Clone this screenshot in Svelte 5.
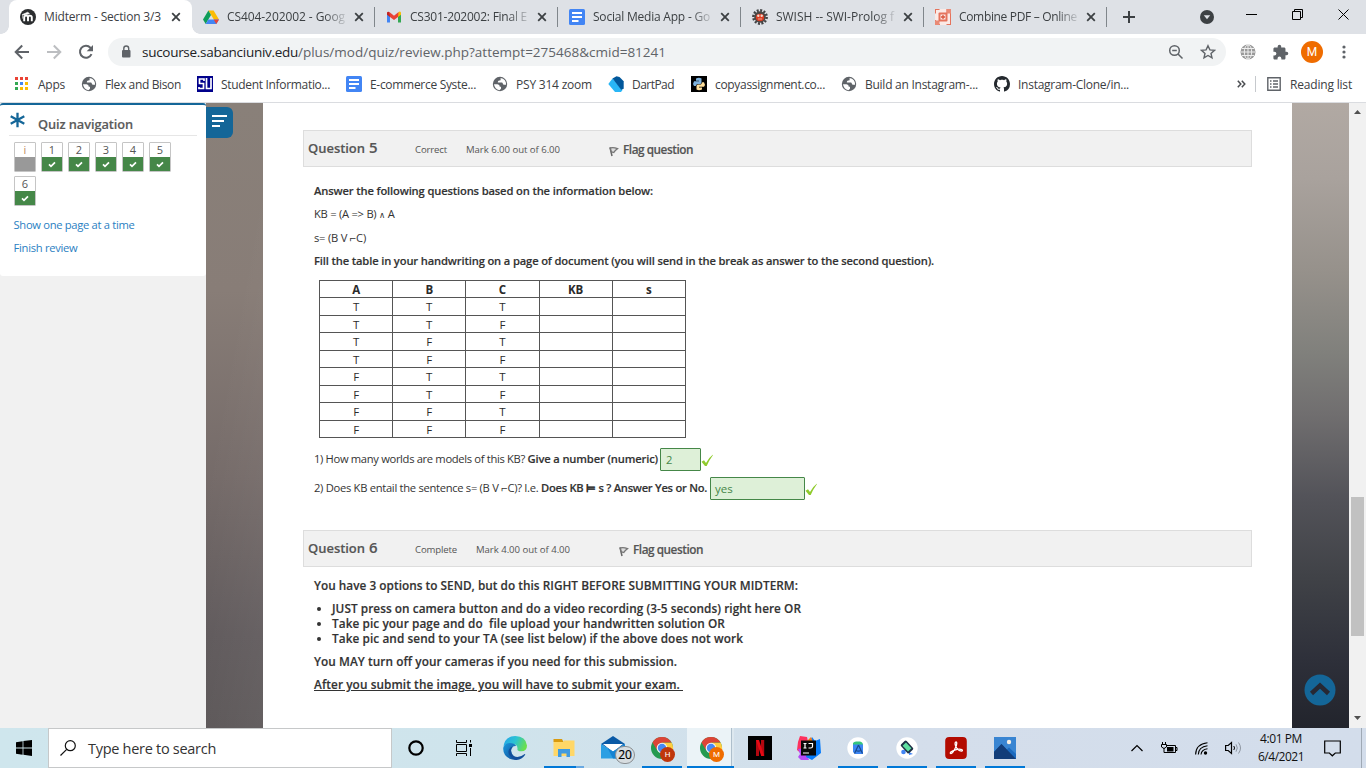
<script>
  const tabs = [
    { icon: 'moodle', title: 'Midterm - Section 3/3', w: 117, active: true },
    { icon: 'drive', title: 'CS404-202002 - Goog', w: 118 },
    { icon: 'gmail', title: 'CS301-202002: Final E', w: 117 },
    { icon: 'docs', title: 'Social Media App - Go', w: 117 },
    { icon: 'swish', title: 'SWISH -- SWI-Prolog f', w: 118 },
    { icon: 'pdf', title: 'Combine PDF – Online', w: 118 }
  ];
  const bookmarks = [
    { x: 12, icon: 'apps', title: 'Apps', w: 27 },
    { x: 80, icon: 'world', title: 'Flex and Bison', w: 76 },
    { x: 196, icon: 'su', title: 'Student Informatio...', w: 109 },
    { x: 345, icon: 'docs', title: 'E-commerce Syste...', w: 106 },
    { x: 491, icon: 'world', title: 'PSY 314 zoom', w: 76 },
    { x: 607, icon: 'dart', title: 'DartPad', w: 42 },
    { x: 690, icon: 'python', title: 'copyassignment.co...', w: 110 },
    { x: 840, icon: 'world', title: 'Build an Instagram-...', w: 113 },
    { x: 993, icon: 'github', title: 'Instagram-Clone/in...', w: 111 }
  ];
  const worlds = ['TTT', 'TTF', 'TFT', 'TFF', 'FTT', 'FTF', 'FFT', 'FFF'];
  const tasks = [
    { icon: 'edge' },
    { icon: 'explorer', bar: 'stack' },
    { icon: 'mail' },
    { icon: 'chrome', bar: 'open', badge: 'H' },
    { icon: 'chrome', bar: 'current', badge: 'M' },
    { icon: 'netflix' },
    { icon: 'idea' },
    { icon: 'studio', bar: 'open' },
    { icon: 'emulator', bar: 'open' },
    { icon: 'acrobat', bar: 'open' },
    { icon: 'photos', bar: 'open' }
  ];

  // Tracks a label so that it fills the given width in pixels.
  function fit(node, width) {
    const natural = node.getBoundingClientRect().width;
    node.style.letterSpacing = (width - natural) / node.textContent.length + 'px';
  }
</script>

{#snippet icon(name)}
  {#if name === 'moodle'}
    <svg width="16" height="16" viewBox="0 0 16 16"><circle cx="8" cy="8" r="8" fill="#2b2d2f" /><path d="M4.200 12.200V8.400q0-1.800 1.900-1.800T8 8.400v3.800M8 8.400q0-1.800 1.900-1.800t1.900 1.800v3.800" fill="none" stroke="#fff" stroke-width="1.900" /><path d="m2.200 5.600 5.600-2.400 1.700 1.600-5.200 1.300zM2.600 5.600v4" fill="#fff" stroke="#fff" stroke-width=".6" /></svg>
  {:else if name === 'drive'}
    <svg width="16" height="16" viewBox="0 0 16 16"><path d="M5.400 1.500h5.200L16 10.600h-5.200z" fill="#fbbc04" /><path d="M5.400 1.500 8 6 2.700 15 0 10.600z" fill="#0f9d58" /><path d="M5.300 10.600H16L13.300 15H2.700z" fill="#4285f4" /><path d="M13.300 15 10.700 10.600H16z" fill="#ea4335" /></svg>
  {:else if name === 'gmail'}
    <svg width="16" height="16" viewBox="0 0 16 16"><path d="M1 3.500v10h3V6z" fill="#4285f4" /><path d="M12 6v7.500h3v-10z" fill="#34a853" /><path d="M12 4.500V8l3-2.200V3.600q-.8-1.800-2.400-.5z" fill="#fbbc04" /><path d="M1 3.600v2.200L4 8V4.500l-.6-1.400Q1.800 2 1 3.600z" fill="#c5221f" /><path d="M3.400 3.100 8 6.700l4.600-3.600L12 8l-4 3-4-3z" fill="#ea4335" /></svg>
  {:else if name === 'docs'}
    <svg width="16" height="16" viewBox="0 0 16 16"><rect width="16" height="16" rx="1.500" fill="#4285f4" /><path d="M3 4h10M3 8h10M3 12h6.500" stroke="#fff" stroke-width="2" /></svg>
  {:else if name === 'swish'}
    <svg width="16" height="16" viewBox="0 0 16 16"><circle cx="8" cy="8" r="6.600" fill="none" stroke="#414244" stroke-width="2.600" stroke-dasharray="2 1.450" /><circle cx="8" cy="8" r="5.800" fill="#4a4745" /><ellipse cx="8" cy="8.500" rx="4.100" ry="3.700" fill="#dd3e23" /><circle cx="6.300" cy="6.700" r="1.200" fill="#f5d9d0" /><circle cx="9.700" cy="6.700" r="1.200" fill="#f5d9d0" /><path d="M6 10h4" stroke="#f3c9bd" stroke-width=".7" /></svg>
  {:else if name === 'pdf'}
    <svg width="16" height="16" viewBox="0 0 16 16"><rect width="16" height="16" fill="#fbeae6" /><path d="M0 0h4.500v1H1v3.500H0zM11.500 0H16v12h-1V4h-3.500zM0 16v-5h1v4h4v1zM16 16h-4.500v-1H15v-3.500h1z" fill="#e5735c" /><path d="M11.500 0H16v4.500h-4.500zM0 11.500h4.500V16H0z" fill="#e98a76" /><rect x="3.500" y="3.500" width="9" height="9" rx="1" fill="#e5735c" /><rect x="5.500" y="5.500" width="5" height="5" fill="#fbeae6" /><path d="M8 6v4M6 8h4" stroke="#d9543b" stroke-width="1.300" /></svg>
  {:else if name === 'apps'}
    <svg width="16" height="16" viewBox="0 0 16 16"><g fill="#ea4335"><path d="M2 1h3v3H2zM7 1h3v3H7zM12 1h3v3h-3z" /></g><path d="M2 6h3v3H2zM2 11h3v3H2z" fill="#34a853" /><path d="M7 6h3v3H7z" fill="#4285f4" /><path d="M12 6h3v3h-3zM7 11h3v3H7zM12 11h3v3h-3z" fill="#fbbc04" /></svg>
  {:else if name === 'world'}
    <svg width="16" height="16" viewBox="0 0 16 16"><circle cx="8" cy="8" r="7.200" fill="#5f6368" /><path d="M2 8.300h3.500q2.300 0 2.300 2.500H9v2l-1.500 1.400Q2.600 13.300 2 8.300M8.600 2v2.200q-2.800 0-2.800 2.300h4.400l1.300 2.200h2.600Q14.300 3.200 8.600 2" fill="#fff" /></svg>
  {:else if name === 'su'}
    <svg width="16" height="16" viewBox="0 0 16 16"><rect width="16" height="16" fill="#00008b" /><path d="M7 5V3H2.500v4.500h4v5H2V11M9.500 2v10.500H14V2" fill="none" stroke="#fff" stroke-width="1.700" /></svg>
  {:else if name === 'dart'}
    <svg width="16" height="16" viewBox="0 0 16 16"><path d="M.3 8 4.500 2.500 14.500 14l-1.500 2H7z" fill="#29b6f6" /><path d="m4.500 2.500 4-2.200 3 .8 4.200 4.200v7.500l-2.500 1z" fill="#01579b" /></svg>
  {:else if name === 'python'}
    <svg width="16" height="16" viewBox="0 0 16 16"><rect width="16" height="16" /><path d="M5 2.500Q8 1 10.500 2.500v4.200L9.500 8H6L4.700 10H3Q1.400 7.500 3 5.300h5v-.6H5z" fill="#7fb2dd" /><path d="M11 13.500Q8 15 5.500 13.500V9.700L6.500 8.500H10l1.300-2.300H13q1.700 2.300 0 4.600H8v.6h3z" fill="#ffdf9c" /></svg>
  {:else if name === 'github'}
    <svg width="16" height="16" viewBox="0 0 16 16"><path fill="#24292e" d="M8 0C3.580 0 0 3.580 0 8c0 3.540 2.290 6.530 5.470 7.590.4.070.55-.17.55-.38 0-.19-.01-.82-.01-1.490-2.010.37-2.530-.49-2.690-.94-.09-.23-.48-.94-.82-1.130-.28-.15-.68-.52-.01-.53.63-.01 1.080.58 1.230.82.72 1.210 1.870.87 2.330.66.07-.52.28-.87.51-1.070-1.780-.2-3.640-.89-3.640-3.950 0-.87.31-1.590.82-2.150-.08-.2-.36-1.020.08-2.120 0 0 .67-.21 2.200.82.64-.18 1.320-.27 2-.27s1.360.09 2 .27c1.530-1.040 2.200-.82 2.200-.82.44 1.100.16 1.920.08 2.120.51.56.82 1.270.82 2.150 0 3.070-1.870 3.750-3.650 3.950.29.25.54.73.54 1.480 0 1.070-.01 1.930-.01 2.200 0 .21.15.46.55.38A8.010 8.010 0 0 0 16 8c0-4.420-3.580-8-8-8" /></svg>
  {:else if name === 'edge'}
    <svg width="24" height="24" viewBox="0 0 24 24"><defs><linearGradient id="eg1" x1="0" y1="0.200" x2="1" y2="0.500"><stop offset="0" stop-color="#25a6e8" /><stop offset=".5" stop-color="#2cc3d2" /><stop offset="1" stop-color="#6be04a" /></linearGradient><linearGradient id="eg2" x1="0" y1="0" x2="1" y2="1"><stop offset="0" stop-color="#1b98dd" /><stop offset="1" stop-color="#0f4a96" /></linearGradient></defs><path d="M.5 11Q1.500.3 12.200 0 22.800.2 24 9.400q0 5.600-5.700 5.900-4.500 0-3.800-2.400Q14.700 8 9 7.700 2.500 7.500.5 11" fill="url(#eg1)" /><path d="M.3 11.500Q3 5.900 9.300 7.300q2.900.8 3.900 2.700-4.600-.3-5.100 4.200.4 6 6.500 8.900-3.400 1.500-7.100-.1Q-.5 19.500.3 11.500" fill="url(#eg2)" /><path d="M10 10.500q-4.500 5 .8 9.600Q16 22.500 21.800 18q.7 0 .4.800Q18 25 11.700 23.700 3.500 19 6 13.400 7.400 10.600 10 10.500" fill="#124f9b" /></svg>
  {:else if name === 'explorer'}
    <svg width="24" height="24" viewBox="0 0 24 24"><path d="M1.500 3h8.500l1.500 3H1.500z" fill="#d99a0e" /><path d="M1.500 6H11l1-1.500h10.500V20h-21z" fill="#ffd767" /><path d="M6 21v-8h12v8h-3.500v-3.500h-5V21z" fill="#3f9be0" /></svg>
  {:else if name === 'mail'}
    <svg width="24" height="24" viewBox="0 0 24 24"><path d="M0 8 12 0l12 8-12 8z" fill="#0a5aa6" /><path d="M2 8h20l-10 8z" fill="#fff" /><path d="M0 8v14.500h24V8l-12 7.500z" fill="#2b9fe3" /><path d="M24 8v14.500H12L6.500 12 12 15.500z" fill="#1583d2" /></svg>
  {:else if name === 'chrome'}
    <svg width="24" height="24" viewBox="0 0 24 24"><circle cx="12" cy="12" r="11" fill="#249a50" /><path d="M2.500 6.500A11 11 0 0 1 21.600 6.600L12 6.700 7.300 14.500z" fill="#dc4437" /><path d="M12 6.700h9.700A11 11 0 0 1 11.500 23l5.100-8.200Q18 8.500 12 6.700" fill="#ffcd40" /><circle cx="12" cy="12" r="5.300" fill="#f4f4f4" /><circle cx="12" cy="12" r="4.200" fill="#4688f4" /></svg>
  {:else if name === 'netflix'}
    <svg width="24" height="24" viewBox="0 0 24 24"><rect width="24" height="24" /><path d="M8 4h3v16H8zM13 4h3.200v16H13z" fill="#b20710" /><path d="M8 4h3l5.200 16h-3z" fill="#e50914" /></svg>
  {:else if name === 'idea'}
    <svg width="24" height="24" viewBox="0 0 24 24"><path d="M1 6 3 0l7 1 2 9-6 9-6-5z" fill="#fe315d" /><path d="m1 13 6-1 5 12H4L1 21l2-3z" fill="#b74af7" /><path d="m12 7 3-6 3 4 5-2 1 14-9 7-6-3z" fill="#087cfa" /><path d="m9 6 5-5 2 5-7 6z" fill="#f97a12" /><rect x="4" y="4.500" width="15" height="15" fill="#080808" /><path d="M6.500 7.500h3M8 7.500V12M6.500 12h3M11.500 7.500h4v3q0 1.500-2 1.500h-2M6 17h6" fill="none" stroke="#fff" stroke-width="1.200" /></svg>
  {:else if name === 'studio'}
    <svg width="24" height="24" viewBox="0 0 24 24"><circle cx="12" cy="12" r="10.700" fill="#fff" /><path d="M7 9V7q1-1.500 3-1.500h4Q17 6 17 9z" fill="#36c57d" /><path d="M7 8.500h10V18H9l-2-2z" fill="#3d86f3" /><path d="m12.500 9-4 8.500M12.500 9l4 8.500M10 14.500q2.500 1.500 5-.3" fill="none" stroke="#174a8f" stroke-width="1.200" /></svg>
  {:else if name === 'emulator'}
    <svg width="24" height="24" viewBox="0 0 24 24"><circle cx="12" cy="12" r="10.700" fill="#fff" /><circle cx="8.500" cy="16" r="2.300" fill="#4285f4" /><path d="m14 16 4 2-4 1z" fill="#4285f4" /><rect x="8.200" y="5" width="7.600" height="12" rx="1.500" transform="rotate(-43 12 11)" fill="#1d3046" /><rect x="9.700" y="7" width="4.600" height="8" transform="rotate(-43 12 11)" fill="#5fe0a0" /></svg>
  {:else if name === 'acrobat'}
    <svg width="24" height="24" viewBox="0 0 24 24"><rect x="1.200" y="1" width="21.600" height="22" rx="4" fill="#b30b00" /><path d="M6.500 17.500q-1.200-1.500 5-3.700 4-1.300 6.300-.2 1.500 1.300-.5 1.600-2.500-.2-4.500-3-2.600-4-1.300-6 1-.9 1.300.8.100 3-2.500 7-2.300 4-3.800 3.500" fill="none" stroke="#fff" stroke-width="1.300" /></svg>
  {:else if name === 'photos'}
    <svg width="24" height="24" viewBox="0 0 24 24"><rect x="1" y="1" width="22" height="22" fill="#3985d2" /><path d="M1 16 8.500 8 22 23H1z" fill="#184e91" /><path d="m10 17 6-5.500 7 6.500v5H14z" fill="#1b6abf" /><path d="M1 16 8.500 8 23 23H1z" fill="#123d79" /><circle cx="16" cy="6" r="2.200" fill="#f6efe5" /></svg>
  {/if}
{/snippet}

{#snippet tick()}
  <svg class="tick" width="13" height="13" viewBox="0 0 13 13"><path d="M.5 7.800 3 6.200 5 9Q7.500 4 11.700.8L12 1Q8 6.500 5.700 12H4z" fill="#8fcb2c" /></svg>
{/snippet}

{#snippet header(num, state, sw, mark)}
  <div class="qhead">
    <div class="qno"><span use:fit={57}>Question</span><b>{num}</b></div>
    <small style:width="{sw + 19}px"><span use:fit={sw}>{state}</span></small>
    <small class="mark"><span use:fit={94}>{mark}</span></small>
    <svg width="10" height="11" viewBox="0 0 10 11"><path d="m1 1.500 2 8.500" stroke="#666" stroke-width="1.500" /><path d="M1.200 2q3.500-.8 7.300.7Q6 4.300 4.800 6.500L2.500 6z" fill="#ddd" stroke="#777" stroke-width="1.300" /></svg>
    <strong><span use:fit={70}>Flag question</span></strong>
  </div>
{/snippet}

<div class="screen">
  <div class="tabstrip">
    {#each tabs as tab}
      <div class="tab" class:active={tab.active}>
        {@render icon(tab.icon)}
        <div class="title" class:fade={!tab.active}><span use:fit={tab.w}>{tab.title}</span></div>
        <svg width="10" height="10" viewBox="0 0 10 10"><path d="m1.200 1.200 7.600 7.600m0-7.600L1.200 8.800" stroke="#3c4043" stroke-width="1.800" /></svg>
      </div>
    {/each}
    <svg class="plus" width="14" height="14" viewBox="0 0 14 14"><path d="M7 1v12M1 7h12" stroke="#3c4043" stroke-width="2" /></svg>
    <svg class="drop" width="14" height="14" viewBox="0 0 14 14"><circle cx="7" cy="7" r="7" fill="#3c4043" /><path d="M3.800 5.300h6.400L7 9.300z" fill="#dee1e6" /></svg>
    <div class="window">
      <svg width="11" height="11" viewBox="0 0 11 11"><path d="M0 5.500h11" stroke="#000" /></svg>
      <svg width="11" height="11" viewBox="0 0 11 11"><path d="M.5 2.500h8v8h-8zM2.500 2V.5h8v8H9" fill="none" stroke="#000" /></svg>
      <svg width="11" height="11" viewBox="0 0 11 11"><path d="m.5.5 10 10m0-10-10 10" stroke="#000" /></svg>
    </div>
  </div>

  <div class="toolbar">
    <svg width="16" height="16" viewBox="0 0 16 16"><path d="M15 8H2M8.200 1.500 1.700 8l6.500 6.500" fill="none" stroke="#5f6368" stroke-width="2" /></svg>
    <svg width="16" height="16" viewBox="0 0 16 16"><path d="M1 8h13M7.800 1.500 14.300 8l-6.500 6.500" fill="none" stroke="#bcbec1" stroke-width="2" /></svg>
    <svg width="16" height="16" viewBox="0 0 16 16"><path d="M13.500 10.200A6 6 0 1 1 12.400 3.700L14 5.400" fill="none" stroke="#5f6368" stroke-width="2" /><path d="M15 1v6.300H8.700z" fill="#5f6368" /></svg>
    <div class="omnibox">
      <svg width="12" height="14" viewBox="0 0 12 14"><rect x="2" y="5" width="8.500" height="7.500" rx="1" fill="#5f6368" /><path d="M3.800 6V3.500a2.450 2.450 0 0 1 4.900 0V6" fill="none" stroke="#5f6368" stroke-width="1.400" /></svg>
      <div class="url"><span class="host" use:fit={156}>sucourse.sabanciuniv.edu</span><span use:fit={368}>/plus/mod/quiz/review.php?attempt=275468&amp;cmid=81241</span></div>
      <svg width="16" height="16" viewBox="0 0 16 16"><circle cx="6.500" cy="6.500" r="4.800" fill="none" stroke="#5f6368" stroke-width="1.500" /><path d="m10 10 4.500 4.500M4.200 6.500h4.600" stroke="#5f6368" stroke-width="1.500" /></svg>
      <svg width="16" height="16" viewBox="0 0 16 16"><path d="m8 1.700 1.900 4.200 4.600.4L11 9.400l1 4.500-4-2.400-4 2.400 1-4.500-3.500-3.100 4.600-.4z" fill="none" stroke="#5f6368" stroke-width="1.400" /></svg>
    </div>
    <svg width="16" height="16" viewBox="0 0 16 16"><circle cx="8" cy="8" r="7.500" fill="#999" /><path d="M8 .5v15M1 8h14M2 4.500h12M2 11.500h12" stroke="#eee" fill="none" /><ellipse cx="8" cy="8" rx="3.700" ry="7.200" fill="none" stroke="#eee" /></svg>
    <svg width="17" height="17" viewBox="0 0 24 24"><path fill="#5f6368" d="M20.500 11H19V7c0-1.100-.9-2-2-2h-4V3.500a2.500 2.500 0 0 0-5 0V5H4c-1.100 0-2 .9-2 2v3.800h1.500a2.700 2.700 0 0 1 0 5.400H2V20c0 1.100.9 2 2 2h3.800v-1.500a2.700 2.700 0 0 1 5.400 0V22H17c1.100 0 2-.9 2-2v-4h1.500a2.500 2.500 0 0 0 0-5" /></svg>
    <div class="avatar">M</div>
    <svg width="4" height="14" viewBox="0 0 4 14"><g fill="#5f6368"><circle cx="2" cy="2" r="1.600" /><circle cx="2" cy="7" r="1.600" /><circle cx="2" cy="12" r="1.600" /></g></svg>
  </div>

  <div class="bookmarks">
    {#each bookmarks as b, i}
      <div class="bm" class:first={i === 0} style:width="{(bookmarks[i + 1]?.x ?? 1236) - b.x}px">
        {@render icon(b.icon)}<span use:fit={b.w}>{b.title}</span>
      </div>
    {/each}
    <svg width="9" height="8" viewBox="0 0 9 8"><path d="m.8.8 3 3.200-3 3.200M4.800.8l3 3.200-3 3.200" fill="none" stroke="#4a4d51" stroke-width="1.500" /></svg>
    <i></i>
    <svg width="14" height="14" viewBox="0 0 14 14"><path d="M.8.8h12.400v12.400H.8zM3 4h1.500M6 4h5M3 7h1.500M6 7h5M3 10h1.500M6 10h5" fill="none" stroke="#5f6368" stroke-width="1.400" /></svg>
    <span class="reading" use:fit={62}>Reading list</span>
  </div>

  <div class="page">
    <aside>
      <div class="block">
        <div class="bhead">
          <svg width="16" height="16" viewBox="0 0 16 16"><path d="M8.500.8v14.400M1.700 4.300l13.600 7.400M15.300 4.300 1.700 11.700" stroke="#146698" stroke-width="2.300" /></svg>
          <b use:fit={95}>Quiz navigation</b>
        </div>
        <div class="cells">
          {#each ['i', '1', '2', '3', '4', '5', '6'] as n}
            <div class="cell" class:info={n === 'i'}>
              <span>{n}</span>
              <div>{#if n !== 'i'}<svg width="8" height="7" viewBox="0 0 8 7"><path d="m1 3.300 2 2L7 1.300" fill="none" stroke="#fff" stroke-width="1.700" /></svg>{/if}</div>
            </div>
          {/each}
        </div>
        <a href="#all"><span use:fit={121}>Show one page at a time</span></a>
        <a href="#finish"><span use:fit={64}>Finish review</span></a>
      </div>
    </aside>
    <div class="photo left">
      <div class="toggle"><svg width="16" height="12" viewBox="0 0 16 12"><path d="M0 1h15M0 6h12M0 11h8" stroke="#fff" stroke-width="2" /></svg></div>
    </div>
    <main>
      {@render header('5', 'Correct', 32, 'Mark 6.00 out of 6.00')}
      <div class="body">
        <p><b use:fit={339}>Answer the following questions based on the information below:</b></p>
        <p><span use:fit={80.500}>KB = (A =&gt; B) <i class="wedge">∧</i> A</span></p>
        <p><span use:fit={52}>s= (B V ⌐C)</span></p>
        <p><b use:fit={620}>Fill the table in your handwriting on a page of document (you will send in the break as answer to the second question).</b></p>
        <table>
          <thead><tr><th>A</th><th>B</th><th>C</th><th>KB</th><th>s</th></tr></thead>
          <tbody>
            {#each worlds as w}
              <tr>{#each w as v}<td>{v}</td>{/each}<td></td><td></td></tr>
            {/each}
          </tbody>
        </table>
        <div class="answer">
          <span use:fit={213.500}>1) How many worlds are models of this KB?&nbsp;</span><b use:fit={130.500}>Give a number (numeric)</b>
          <div class="field short">2</div>{@render tick()}
        </div>
        <div class="answer">
          <span use:fit={227}>2) Does KB entail the sentence s= (B V ⌐C)? I.e.&nbsp;</span><b use:fit={166}>Does KB ⊨ s ? Answer Yes or No.</b>
          <div class="field long">yes</div>{@render tick()}
        </div>
      </div>
      {@render header('6', 'Complete', 42, 'Mark 4.00 out of 4.00')}
      <div class="body last">
        <p><b use:fit={484}>You have 3 options to SEND, but do this RIGHT BEFORE SUBMITTING YOUR MIDTERM:</b></p>
        <ul>
          <li><b use:fit={469}>JUST press on camera button and do a video recording (3-5 seconds) right here OR</b></li>
          <li><b use:fit={393}>Take pic your page and do&nbsp; file upload your handwritten solution OR</b></li>
          <li><b use:fit={411}>Take pic and send to your TA (see list below) if the above does not work</b></li>
        </ul>
        <p><b use:fit={363}>You MAY turn off your cameras if you need for this submission.</b></p>
        <p><b class="under" use:fit={369}>After you submit the image, you will have to submit your exam.&nbsp;</b></p>
      </div>
    </main>
    <div class="photo right">
      <svg width="32" height="32" viewBox="0 0 32 32"><circle cx="16" cy="16" r="15.500" fill="#146698" /><path d="m7.500 19.500 8.500-8 8.500 8" fill="none" stroke="#272833" stroke-width="4.500" stroke-linejoin="miter" /></svg>
    </div>
    <div class="scroll">
      <svg width="7" height="4" viewBox="0 0 7 4"><path d="M0 4 3.500 0 7 4z" fill="#505050" /></svg>
      <div></div>
      <svg width="7" height="4" viewBox="0 0 7 4"><path d="M0 0h7L3.500 4z" fill="#505050" /></svg>
    </div>
  </div>

  <div class="taskbar">
    <div class="start"><svg width="16" height="16" viewBox="0 0 16 16"><path d="M0 2.200 6.600 1.200V7.500H0zM7.400 1.100 16 0v7.500H7.400zM0 8.400h6.600v6.300L0 13.800zM7.400 8.400H16V16L7.400 14.800z" /></svg></div>
    <div class="search">
      <svg width="16" height="16" viewBox="0 0 16 16"><circle cx="10.300" cy="5.700" r="5" fill="none" stroke="#111" stroke-width="1.200" /><path d="M6.700 9.300.5 15.500" stroke="#111" stroke-width="1.200" /></svg>
      <span use:fit={128}>Type here to search</span>
    </div>
    <div class="sys"><svg width="16" height="16" viewBox="0 0 16 16"><circle cx="8" cy="8" r="6.700" fill="none" stroke="#000" stroke-width="2.200" /></svg></div>
    <div class="sys"><svg width="16" height="16" viewBox="0 0 16 16"><path d="M.5 0v2.500h10V0M.5 4.500h10v7H.500zM.5 16v-2.500h10V16M14.500 0v2.500M14.500 8v8" fill="none" stroke="#000" /><path d="M13 4h3v3h-3z" /></svg></div>
    <div class="tasks">
      {#each tasks as t}
        <div class="task {t.bar ?? ''}">
          {@render icon(t.icon)}
          {#if t.badge}<em class={t.badge}>{t.badge}</em>{/if}
          {#if t.icon === 'mail'}<em class="count">20</em>{/if}
        </div>
      {/each}
    </div>
    <div class="tray">
      <svg width="12" height="8" viewBox="0 0 12 8"><path d="m.5 7 5.500-5.500L11.500 7" fill="none" stroke="#000" stroke-width="1.200" /></svg>
      <svg width="17" height="12" viewBox="0 0 17 12"><path d="M5 3.500h9.500v7H4M15 5.500h1v3h-1M1.500 0v2.500M4.500 0v2.500M.5 2.500h5V5l-2.500 1.500L.5 5zM3 6v4.500h1.500" fill="none" stroke="#000" /><path d="M6 5h6.500v4.500H6z" /></svg>
      <svg width="13" height="13" viewBox="0 0 13 13"><g fill="none" stroke="#000" stroke-width="1.100"><path d="M.6 12.500Q1 2 12.500.8M3.300 12.500Q3.500 4.800 12.500 3.700M6 12.500Q6.500 7.500 12.500 6.700" /></g><circle cx="10.500" cy="11" r="1.700" /></svg>
      <svg width="17" height="14" viewBox="0 0 17 14"><path d="M.6 4.500h2.600L6.500 1.500v11L3.200 9.500H.6z" fill="none" stroke="#000" stroke-width="1.200" /><path d="M8.800 5q1.500 2 0 4" fill="none" stroke="#000" /><path d="M11 3.300q2.600 3.700 0 7.400M13.500 1.500q4 5.500 0 11" fill="none" stroke="#8d95a0" /></svg>
      <div class="clock"><span use:fit={42}>4:01 PM</span><span use:fit={46}>6/4/2021</span></div>
      <svg width="17" height="17" viewBox="0 0 17 17"><path d="M.7 1h15.600v12h-5l-3 2.800-2.900-2.800H.7z" fill="none" stroke="#000" stroke-width="1.200" /></svg>
    </div>
  </div>
</div>

<style>
  :global(body) { overflow: hidden; }
  .screen { width: 1366px; height: 768px; display: flex; flex-direction: column; font-family: 'Open Sans', sans-serif; font-size: 12px; color: #3c4043; background: #fff; overflow: hidden; }
  .screen :global(svg) { display: block; flex: none; }
  span, b { display: inline-block; white-space: pre; flex: none; }

  .tabstrip { height: 34px; flex: none; background: #dee1e6; display: flex; align-items: center; padding-left: 9px; }
  .tab { position: relative; box-sizing: border-box; width: 183px; height: 34px; display: flex; align-items: center; padding-left: 11px; flex: none; }
  .tab .title { width: 119px; margin: 0 8px; overflow: hidden; line-height: 20px; flex: none; }
  .tab.active { background: #fff; border-radius: 8px 8px 0 0; }
  .tab.active::before, .tab.active::after { content: ''; position: absolute; bottom: 0; width: 8px; height: 8px; }
  .tab.active::before { left: -8px; background: radial-gradient(circle at 0 0, transparent 7.500px, #fff 8px); }
  .tab.active::after { right: -8px; background: radial-gradient(circle at 100% 0, transparent 7.500px, #fff 8px); }
  .tab:not(.active)::after { content: ''; position: absolute; right: 0; top: 7px; width: 1px; height: 20px; background: #80868b; }
  .tab:nth-child(2)::after { right: 0; }
  .fade { -webkit-mask-image: linear-gradient(90deg, #000 82%, #0002); mask-image: linear-gradient(90deg, #000 82%, #0002); }
  .plus { margin-left: 15px; }
  .drop { margin-left: 64px; }
  .window { display: flex; gap: 35px; margin: -5px 0 0 32px; }

  .toolbar { height: 38px; flex: none; display: flex; align-items: center; padding: 0 0 2px 14px; box-sizing: border-box; gap: 16px; }
  .omnibox { margin-left: -2px; margin-right: -2px; box-sizing: border-box; width: 1118px; height: 28px; border-radius: 14px; background: #f1f3f4; display: flex; align-items: center; padding: 0 10px 0 12px; }
  .url { flex: 1; margin-left: 10px; font-size: 13.500px; color: #5f6368; display: flex; }
  .host { color: #202124; }
  .omnibox > :global(svg:last-child) { margin-left: 16px; }
  .toolbar > :global(svg:nth-of-type(5)) { margin-right: -3px; }
  .avatar { width: 22px; height: 22px; border-radius: 50%; background: #ef6c00; color: #fff; font: 12px/22px Roboto, sans-serif; text-align: center; margin: 0 3px 0 -1px; }

  .bookmarks { height: 31px; flex: none; box-sizing: border-box; border-bottom: 1px solid #dadce0; display: flex; align-items: center; padding: 0 0 6px 13px; }
  .bm { display: flex; align-items: center; gap: 8px; flex: none; }
  .first { gap: 9px; }
  .bookmarks i { width: 1px; height: 16px; background: #c6c9cd; margin: 0 11px 0 9px; }
  .reading { margin-left: 9px; }

  .page { height: 625px; flex: none; display: flex; font-size: 11.200px; color: #333; }
  .page b { font-weight: 600; -webkit-text-stroke: .15px currentColor; }
  aside { width: 206px; background: #f1f1f1; flex: none; }
  .block { box-sizing: border-box; height: 173px; border-top: 2px solid #146698; background: #fff; border-radius: 3px; padding: 0 9px; }
  .bhead { height: 31px; display: flex; align-items: flex-start; border-bottom: 1px solid #e6e6e6; color: #5b5b5b; font-size: 12.800px; box-sizing: border-box; }
  .bhead svg { margin-top: 7px; }
  .bhead b { margin: 11px 0 0 13px; line-height: 17px; }
  .cells { display: flex; flex-wrap: wrap; gap: 4px 5px; padding: 6px 0 0 5px; height: 67px; align-content: flex-start; }
  .cell { box-sizing: border-box; width: 22px; height: 30px; border: 1px solid #c5c5c5; border-radius: 1px; text-align: center; }
  .cell span { display: block; height: 14px; line-height: 14px; font-size: 11px; color: #555; }
  .cell.info span { color: #c08a5a; }
  .cell div { height: 14px; background: #458748; display: flex; align-items: center; justify-content: center; }
  .cell.info div { background: #999; }
  aside a { display: block; height: 23px; line-height: 23px; padding-left: 4.500px; color: #2a80c2; text-decoration: none; }
  .cells + a { margin-top: 4px; }

  .photo { width: 57px; flex: none; }
  .left { background: linear-gradient(100deg, #0000 40%, #ffffff10), linear-gradient(#898079, #887d77 30%, #756b69 60%, #5f595b 85%, #5a5556); }
  .right { background: linear-gradient(#b1a9a3, #a9a29d 12%, #96918b 27%, #80807c 40%, #706e6f 50%, #535359 63%, #404247 76%, #2e303a 89%, #22242c); display: flex; align-items: flex-end; padding: 0 0 22px 12px; box-sizing: border-box; }
  .toggle { width: 27px; height: 31px; margin-top: 4px; background: #146698; border-radius: 0 6px 6px 0; display: flex; align-items: center; justify-content: center; box-sizing: border-box; padding-bottom: 3px; }

  main { width: 1029px; flex: none; background: #fff; box-sizing: border-box; padding: 27px 40px 0 40px; }
  .qhead { box-sizing: border-box; height: 37px; width: 949px; border: 1px solid #ddd; background: #f1f1f1; display: flex; align-items: center; padding-left: 4px; color: #555; }
  .qno { width: 107px; font-size: 13px; font-weight: 600; display: flex; align-items: baseline; gap: 4px; padding-bottom: 3px; -webkit-text-stroke: .15px currentColor; }
  .qno b { font-size: 15px; line-height: 18px; }
  .qhead small { font-size: 9.600px; flex: none; padding-top: 1px; }
  .mark { width: 143px; }
  .qhead svg { margin: 5px 4px 0 0; }
  .qhead strong { font-size: 11.800px; font-weight: 600; -webkit-text-stroke: .15px currentColor; }
  .body { height: 363px; box-sizing: border-box; padding: 12px 0 0 11px; }
  .last { height: auto; padding-top: 7px; font-size: 11.800px; }
  p { margin: 0; height: 23.400px; line-height: 23.400px; }
  .wedge { font: normal 8.500px/10px 'DejaVu Sans', sans-serif; }
  table { border-collapse: collapse; table-layout: fixed; width: 367px; margin: 7px 0 6px 5px; color: #2b2b2b; font: 11.500px/16px 'Open Sans', sans-serif; }
  tr { height: 17.500px; }
  td, th { border: 1px solid #555; padding: 1px 0 0; height: 15.500px; line-height: 15px; text-align: center; }
  .answer { height: 29px; display: flex; align-items: center; }
  .field { box-sizing: border-box; height: 23px; border: 1px solid #458748; border-radius: 1px; background: #def0d8; color: #458748; padding-left: 5px; line-height: 21px; margin: 1px 0 0 2px; }
  .short { width: 41px; }
  .long { width: 95px; margin-left: 3px; padding-left: 4px; font-size: 11.500px; }
  .tick { margin: 3px 0 0 -.5px; }
  ul { margin: 3.500px 0; padding: 0 0 0 18px; }
  ul + p { margin-top: 4px; }
  li { height: 15px; line-height: 15px; }
  .under { text-decoration: underline; }

  .scroll { width: 17px; background: #f1f1f1; display: flex; flex-direction: column; align-items: center; }
  .scroll svg:first-child { margin-top: 7px; }
  .scroll div { width: 13px; height: 139px; background: #c1c1c1; margin: 383px 0 80px; flex: none; }

  .taskbar { height: 40px; flex: none; display: flex; background: linear-gradient(90deg, #cfe6ed, #cfe4ec 35%, #d4deeb 65%, #d3ddeb); color: #111; }
  .start { width: 48px; display: flex; align-items: center; justify-content: center; }
  .search { width: 344px; box-sizing: border-box; border: 1px solid #c6c8c9; background: #fff; display: flex; align-items: center; padding-left: 11px; gap: 12px; font-size: 14.500px; color: #333; }
  .sys { width: 48px; display: flex; align-items: center; justify-content: center; }
  .tasks { display: flex; margin-left: 2px; }
  .task { position: relative; width: 49px; height: 40px; display: flex; align-items: center; justify-content: center; }
  .task::after { position: absolute; left: 5px; right: 4px; bottom: 0; height: 2px; background: #0078d7; }
  .open::after, .stack::after, .current::after { content: ''; }
  .stack::after { background: linear-gradient(90deg, #0078d7 32px, #69a9e2 32px); }
  .current { background: linear-gradient(90deg, transparent 1px, #ebf3f7 1px, #ebf3f7 45px, #aebfcc 45px, #aebfcc 46px, #dde8ef 46px, #dde8ef 48px, transparent 48px); }
  .current::after { left: 1px; right: 1px; }
  em { position: absolute; left: 23px; top: 19px; width: 15px; height: 15px; border-radius: 50%; color: #fff; font: normal 8px/15px Roboto, sans-serif; text-align: center; }
  .H { background: #bf360c; }
  .M { background: #ef6c00; }
  .count { left: 27px; top: 18px; width: 18px; height: 16px; border: 1px solid #8a8f93; background: #d7dde0; color: #000; border-radius: 9px; font: normal 12px/16px 'Open Sans', sans-serif; -webkit-text-stroke: .2px #000; }
  .tray { flex: 1; display: flex; align-items: center; justify-content: flex-end; border-right: 1px solid #9fa9b5; margin-right: 4px; padding-right: 20px; gap: 17px; }
  .clock { display: flex; flex-direction: column; align-items: center; width: 50px; line-height: 18px; margin: -1px 1px 0 -3px; }
  .tray > :global(svg:first-child) { margin-right: 1px; }
</style>
